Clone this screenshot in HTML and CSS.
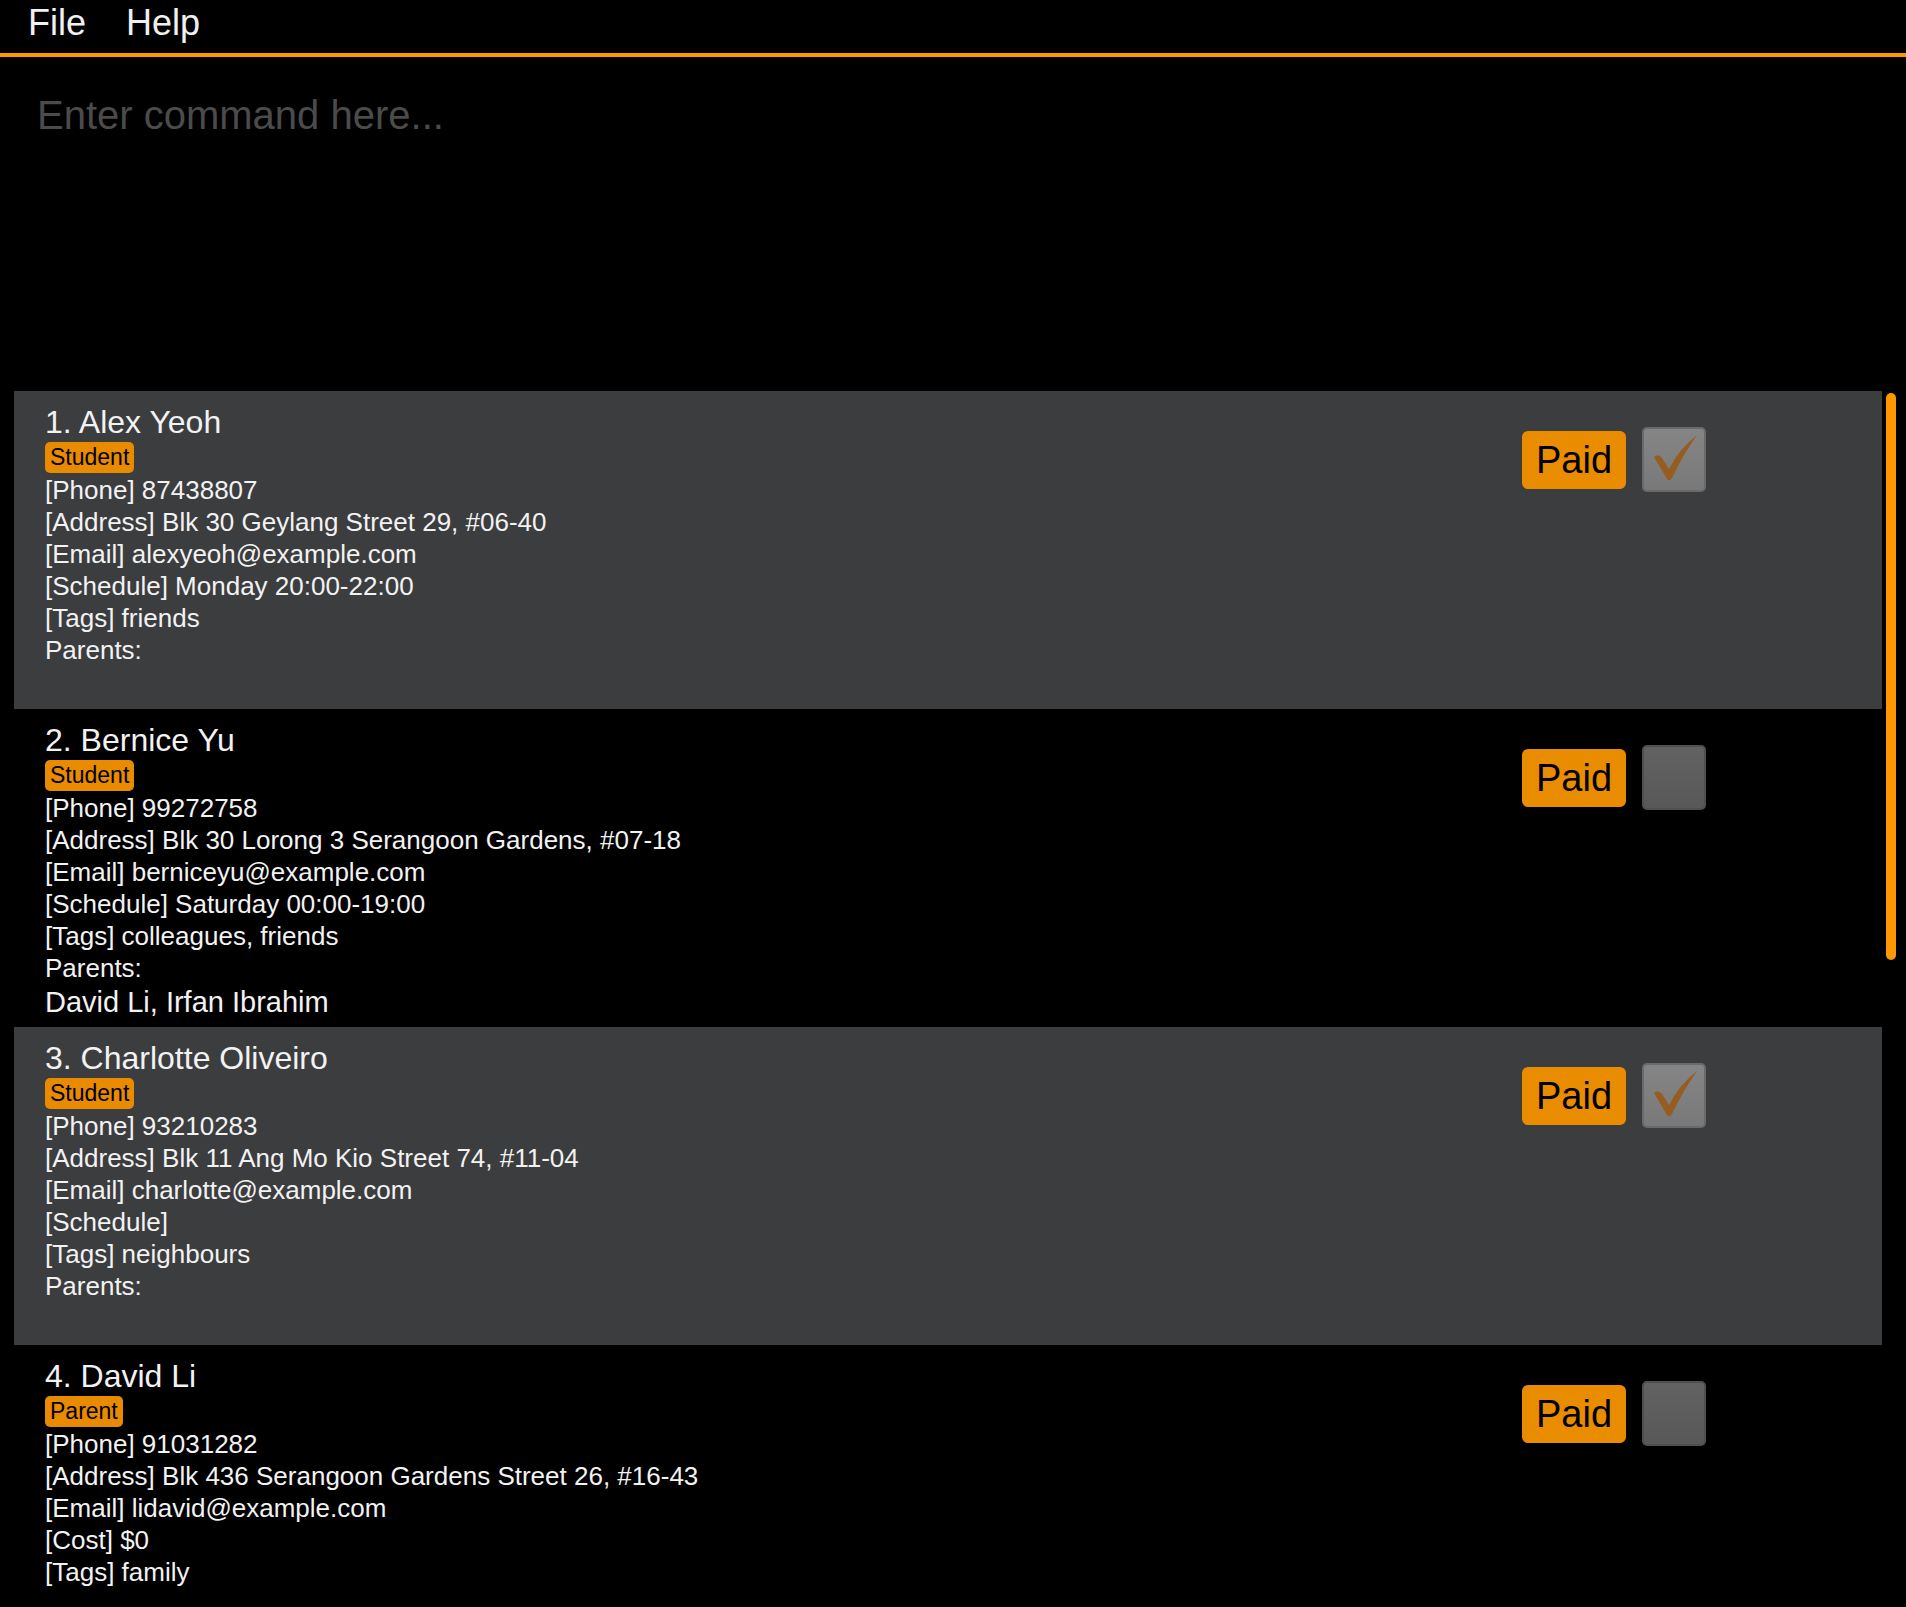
FILE: index.html
```html
<!DOCTYPE html>
<html>
<head>
<meta charset="utf-8">
<link rel="stylesheet" href="styles.css">
</head>
<body>
<div class="app">
  <div class="menubar">
    <span class="menu-item">File</span>
    <span class="menu-item">Help</span>
  </div>
  <div class="command">
    <div class="placeholder">Enter command here...</div>
  </div>
  <div class="list-area">
    <div class="list">
      <div class="card odd">
        <div class="info">
          <div class="name">1. Alex Yeoh</div>
          <div class="tags"><span class="tag">Student</span></div>
          <div class="line">[Phone] 87438807</div>
          <div class="line">[Address] Blk 30 Geylang Street 29, #06-40</div>
          <div class="line">[Email] alexyeoh@example.com</div>
          <div class="line">[Schedule] Monday 20:00-22:00</div>
          <div class="line">[Tags] friends</div>
          <div class="line">Parents:</div>
        </div>
        <div class="actions">
          <div class="paid">Paid</div>
          <div class="check checked">
            <svg width="64" height="65" viewBox="0 0 64 65"><path d="M12 30 Q16 26 20 31 L27 42 Q37 22 55 8 Q42 26 30 51 Q28 55 25 52 Z" fill="#955d20"/></svg>
          </div>
        </div>
      </div>
      <div class="card even">
        <div class="info">
          <div class="name">2. Bernice Yu</div>
          <div class="tags"><span class="tag">Student</span></div>
          <div class="line">[Phone] 99272758</div>
          <div class="line">[Address] Blk 30 Lorong 3 Serangoon Gardens, #07-18</div>
          <div class="line">[Email] berniceyu@example.com</div>
          <div class="line">[Schedule] Saturday 00:00-19:00</div>
          <div class="line">[Tags] colleagues, friends</div>
          <div class="line">Parents:</div>
          <div class="parents">David Li, Irfan Ibrahim</div>
        </div>
        <div class="actions">
          <div class="paid">Paid</div>
          <div class="check"></div>
        </div>
      </div>
      <div class="card odd">
        <div class="info">
          <div class="name">3. Charlotte Oliveiro</div>
          <div class="tags"><span class="tag">Student</span></div>
          <div class="line">[Phone] 93210283</div>
          <div class="line">[Address] Blk 11 Ang Mo Kio Street 74, #11-04</div>
          <div class="line">[Email] charlotte@example.com</div>
          <div class="line">[Schedule]</div>
          <div class="line">[Tags] neighbours</div>
          <div class="line">Parents:</div>
        </div>
        <div class="actions">
          <div class="paid">Paid</div>
          <div class="check checked">
            <svg width="64" height="65" viewBox="0 0 64 65"><path d="M12 30 Q16 26 20 31 L27 42 Q37 22 55 8 Q42 26 30 51 Q28 55 25 52 Z" fill="#955d20"/></svg>
          </div>
        </div>
      </div>
      <div class="card even">
        <div class="info">
          <div class="name">4. David Li</div>
          <div class="tags"><span class="tag">Parent</span></div>
          <div class="line">[Phone] 91031282</div>
          <div class="line">[Address] Blk 436 Serangoon Gardens Street 26, #16-43</div>
          <div class="line">[Email] lidavid@example.com</div>
          <div class="line">[Cost] $0</div>
          <div class="line">[Tags] family</div>
        </div>
        <div class="actions">
          <div class="paid">Paid</div>
          <div class="check"></div>
        </div>
      </div>
    </div>
    <div class="scrollbar"><div class="thumb"></div></div>
  </div>
</div>
</body>
</html>
```
FILE: styles.css
```css
html, body {
  margin: 0;
  padding: 0;
  background: #000;
}
body {
  width: 1906px;
  height: 1607px;
  overflow: hidden;
  font-family: "Liberation Sans", Arial, sans-serif;
  color: #f2f2f2;
}
.app {
  display: flex;
  flex-direction: column;
}
.menubar {
  height: 53px;
  border-bottom: 4px solid #ff9800;
  display: flex;
  align-items: flex-start;
  gap: 40px;
  padding-left: 28px;
}
.menu-item {
  font-size: 36px;
  line-height: 45px;
  color: #f0f0f0;
}
.command {
  height: 334px;
  box-sizing: border-box;
  padding: 34px 37px;
}
.placeholder {
  font-size: 40px;
  line-height: 48px;
  color: #4b4b4b;
}
.list-area {
  display: flex;
  padding-left: 14px;
  gap: 4px;
}
.list {
  width: 1868px;
  display: flex;
  flex-direction: column;
}
.card {
  height: 318px;
  box-sizing: border-box;
  padding: 12px 0 0 31px;
  display: flex;
  align-items: flex-start;
}
.card.odd {
  background: #3c3d3f;
}
.card.even {
  background: #000;
}
.info {
  flex: 1;
}
.name {
  font-size: 32px;
  line-height: 39px;
  color: #f2f2f2;
}
.tags {
  display: flex;
  margin-bottom: 1px;
}
.tag {
  font-size: 23px;
  line-height: 31px;
  padding: 0 5px;
  background: #e88b00;
  color: #000;
  border-radius: 5px;
}
.line {
  font-size: 26px;
  line-height: 32px;
  color: #f2f2f2;
}
.parents {
  font-size: 29px;
  line-height: 36px;
  color: #f2f2f2;
}
.actions {
  display: flex;
  align-items: center;
  gap: 16px;
  margin-top: 24px;
  margin-right: 176px;
}
.paid {
  width: 104px;
  height: 58px;
  box-sizing: border-box;
  background: #ea8c00;
  color: #000;
  font-size: 38px;
  line-height: 58px;
  text-align: center;
  border-radius: 6px;
}
.check {
  width: 64px;
  height: 65px;
  box-sizing: border-box;
  border: 2px solid #4f4f4f;
  border-radius: 5px;
  background: linear-gradient(#626262, #585858);
  position: relative;
}
.check.checked {
  border-color: #6a6a6a;
  background: linear-gradient(#858585, #797979);
}
.check svg {
  position: absolute;
  left: -2px;
  top: -2px;
}
.scrollbar {
  width: 10px;
  display: flex;
  flex-direction: column;
}
.thumb {
  margin-top: 2px;
  height: 567px;
  border-radius: 5px;
  background: #ff9800;
}
```
